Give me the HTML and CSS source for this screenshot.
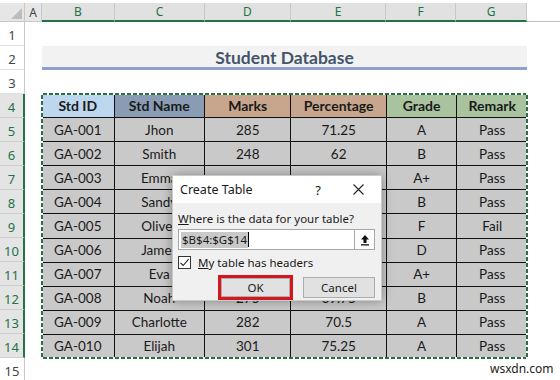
FILE: index.html
```html
<!DOCTYPE html>
<html>
<head>
<meta charset="utf-8">
<link rel="stylesheet" href="styles.css">
</head>
<body>
<div class="page">
  <div class="sheet">
    <div class="corner"><span class="tri"></span></div>
    <div class="ch">A</div>
    <div class="ch sel">B</div>
    <div class="ch sel">C</div>
    <div class="ch sel">D</div>
    <div class="ch sel">E</div>
    <div class="ch sel">F</div>
    <div class="ch sel">G</div>
    <div class="ch-rest"></div>

    <div class="rh r1">1</div>
    <div class="rh r2">2</div>
    <div class="rh r3">3</div>
    <div class="rh sel r4">4</div>
    <div class="rh sel r5">5</div>
    <div class="rh sel r6">6</div>
    <div class="rh sel r7">7</div>
    <div class="rh sel r8">8</div>
    <div class="rh sel r9">9</div>
    <div class="rh sel r10">10</div>
    <div class="rh sel r11">11</div>
    <div class="rh sel r12">12</div>
    <div class="rh sel r13">13</div>
    <div class="rh sel r14">14</div>
    <div class="rh r15">15</div>

    <div class="title">Student Database</div>

    <div class="tbl">
      <div class="th c-id">Std ID</div>
      <div class="th c-name">Std Name</div>
      <div class="th c-tan">Marks</div>
      <div class="th c-tan">Percentage</div>
      <div class="th c-green">Grade</div>
      <div class="th c-green">Remark</div>

      <div class="td">GA-001</div><div class="td">Jhon</div><div class="td">285</div><div class="td">71.25</div><div class="td">A</div><div class="td">Pass</div>
      <div class="td">GA-002</div><div class="td">Smith</div><div class="td">248</div><div class="td">62</div><div class="td">B</div><div class="td">Pass</div>
      <div class="td">GA-003</div><div class="td">Emma</div><div class="td"></div><div class="td"></div><div class="td">A+</div><div class="td">Pass</div>
      <div class="td">GA-004</div><div class="td">Sandy</div><div class="td"></div><div class="td"></div><div class="td">B</div><div class="td">Pass</div>
      <div class="td">GA-005</div><div class="td">Oliver</div><div class="td"></div><div class="td"></div><div class="td">F</div><div class="td">Fail</div>
      <div class="td">GA-006</div><div class="td">James</div><div class="td"></div><div class="td"></div><div class="td">D</div><div class="td">Pass</div>
      <div class="td">GA-007</div><div class="td">Eva</div><div class="td"></div><div class="td"></div><div class="td">A+</div><div class="td">Pass</div>
      <div class="td">GA-008</div><div class="td">Noah</div><div class="td">275</div><div class="td">69.75</div><div class="td">B</div><div class="td">Pass</div>
      <div class="td">GA-009</div><div class="td">Charlotte</div><div class="td">282</div><div class="td">70.5</div><div class="td">A</div><div class="td">Pass</div>
      <div class="td">GA-010</div><div class="td">Elijah</div><div class="td">301</div><div class="td">75.25</div><div class="td">A</div><div class="td">Pass</div>
      <div class="ants"></div>
    </div>
  </div>

  <div class="dialog">
    <div class="dlg-title">
      <span class="dlg-name">Create Table</span>
      <span class="dlg-help">?</span>
      <span class="dlg-close">
        <svg width="11" height="11" viewBox="0 0 11 11"><path d="M0.5 0.5 L10.5 10.5 M10.5 0.5 L0.5 10.5" stroke="#222" stroke-width="1.1" fill="none"/></svg>
      </span>
    </div>
    <div class="dlg-body">
      <div class="dlg-label"><u>W</u>here is the data for your table?</div>
      <div class="dlg-input">
        <span class="range">$B$4:$G$14</span>
        <span class="caret"></span>
        <span class="pick">
          <svg width="10" height="12" viewBox="0 0 10 12"><path d="M5 1 L9 5.5 L6.5 5.5 L6.5 9 L3.5 9 L3.5 5.5 L1 5.5 Z" fill="#111"/><rect x="1" y="10.2" width="8" height="1.3" fill="#111"/></svg>
        </span>
      </div>
      <div class="dlg-check">
        <span class="box">
          <svg width="11" height="11" viewBox="0 0 11 11"><path d="M1.5 5.8 L4.2 8.5 L9.6 2.2" stroke="#222" stroke-width="1.1" fill="none"/></svg>
        </span>
        <span><u>M</u>y table has headers</span>
      </div>
      <div class="dlg-buttons">
        <div class="ok-ring"><div class="btn">OK</div></div>
        <div class="btn cancel">Cancel</div>
      </div>
    </div>
  </div>

  <div class="mark">wsxdn.com</div>
</div>
</body>
</html>
```

FILE: styles.css
```css
* { box-sizing: border-box; }
html, body { margin: 0; padding: 0; background: #fff; }
body { width: 560px; height: 380px; overflow: hidden; font-family: "Lato", "Open Sans", sans-serif; }

.page { position: relative; width: 560px; height: 380px; padding-top: 3px; }

.sheet {
  display: grid;
  grid-template-columns: 25px 17px 73px 90px 86px 95px 70px 71px 1fr;
  grid-template-rows: 19px repeat(15, 24px);
}

.corner {
  grid-column: 1; grid-row: 1;
  background: #e6e6e6;
  border-right: 1px solid #c8c8c8;
  border-bottom: 1px solid #c8c8c8;
  position: relative;
}
.tri {
  position: absolute; right: 2px; bottom: 2px;
  width: 0; height: 0;
  border-left: 11px solid transparent;
  border-bottom: 11px solid #bdbdbd;
}

.ch {
  grid-row: 1;
  background: #e6e6e6;
  border-right: 1px solid #c8c8c8;
  border-bottom: 1px solid #c8c8c8;
  color: #444;
  font-family: "Noto Sans", sans-serif;
  font-size: 12px;
  display: flex; align-items: center; justify-content: center;
}
.ch.sel { background: #e1e1e1; color: #217346; border-bottom: 2px solid #217346; }
.ch-rest { grid-row: 1; border-bottom: 1px solid #bfbfbf; }

.rh {
  grid-column: 1;
  border-right: 1px solid #c8c8c8;
  border-bottom: 1px solid #e0e0e0;
  color: #444;
  font-family: "Noto Sans", sans-serif;
  font-size: 13px;
  display: flex; align-items: flex-end; justify-content: center;
  padding-bottom: 1px;
}
.rh.sel { background: #e4e4e4; color: #217346; border-right: 2px solid #217346; border-bottom-color: #cfcfcf; }
.r1 { grid-row: 2; } .r2 { grid-row: 3; } .r3 { grid-row: 4; } .r4 { grid-row: 5; }
.r5 { grid-row: 6; } .r6 { grid-row: 7; } .r7 { grid-row: 8; } .r8 { grid-row: 9; }
.r9 { grid-row: 10; } .r10 { grid-row: 11; } .r11 { grid-row: 12; } .r12 { grid-row: 13; }
.r13 { grid-row: 14; } .r14 { grid-row: 15; } .r15 { grid-row: 16; }

.title {
  grid-column: 3 / 9; grid-row: 3;
  background: #f2f2f2;
  border-bottom: 3px solid #8ea2d2;
  color: #44546a;
  font-weight: 700;
  font-size: 17.5px;
  display: flex; align-items: center; justify-content: center;
  padding-top: 1px;
}

.tbl {
  grid-column: 3 / 9; grid-row: 5 / 16;
  position: relative;
  display: grid;
  grid-template-columns: 72fr 90fr 86fr 95fr 70fr 70fr;
  grid-template-rows: repeat(11, 1fr);
  gap: 1px;
  background: #111;
}
.th, .td {
  display: flex; align-items: center; justify-content: center;
  color: #1a1a1a;
}
.th { font-weight: 700; font-size: 14px; }
.td { background: #c9c9c9; font-size: 13.5px; }
.c-id { background: #bdd7ee; }
.c-name { background: #8a9cb4; }
.c-tan { background: #c8a68d; }
.c-green { background: #a9c39f; }

.ants {
  position: absolute; inset: -1px;
  border: 2px solid #2a6e45;
  pointer-events: none;
}
.ants::before {
  content: "";
  position: absolute; inset: -2px;
  background:
    repeating-linear-gradient(90deg, #fff 0 2px, transparent 2px 6px) top left / 100% 2px no-repeat,
    repeating-linear-gradient(90deg, #fff 0 2px, transparent 2px 6px) bottom left / 100% 2px no-repeat,
    repeating-linear-gradient(180deg, #fff 0 2px, transparent 2px 6px) top left / 2px 100% no-repeat,
    repeating-linear-gradient(180deg, #fff 0 2px, transparent 2px 6px) top right / 2px 100% no-repeat;
}

.dialog {
  position: absolute;
  left: 172px; top: 175px;
  width: 210px; height: 126px;
  background: #f0f0f0;
  border: 1px solid #c9c9c9;
  box-shadow: 0 0 10px rgba(0,0,0,0.35);
  font-family: "Noto Sans", sans-serif;
  font-size: 11.5px;
  color: #1a1a1a;
  display: flex; flex-direction: column;
}
.dlg-title {
  height: 27px;
  background: #fff;
  display: flex; align-items: center;
  padding: 0 0 0 7px;
  font-size: 12.5px;
}
.dlg-name { flex: 1; }
.dlg-help { width: 18px; text-align: center; margin-right: 26px; font-size: 13px; }
.dlg-close { width: 16px; margin-right: 12px; display: flex; align-items: center; }

.dlg-body { padding: 7px 6px 0 5px; display: flex; flex-direction: column; }
.dlg-label { height: 17px; line-height: 17px; }
.dlg-input {
  margin-top: 2px;
  height: 21px;
  background: #fff;
  border: 1px solid #a8a8a8;
  display: flex; align-items: center;
  padding-left: 2px;
}
.range { background: #c9c9c9; padding: 0 1px; line-height: 16px; }
.caret { width: 1px; height: 15px; background: #000; }
.pick {
  margin-left: auto;
  width: 20px; height: 19px;
  border-left: 1px solid #a8a8a8;
  display: flex; align-items: center; justify-content: center;
  background: #fdfdfd;
}
.dlg-check { display: flex; align-items: center; gap: 7px; height: 22px; margin-top: 1px; }
.box {
  width: 13px; height: 13px;
  border: 1px solid #333;
  background: #fff;
  display: flex; align-items: center; justify-content: center;
}
.dlg-buttons { display: flex; align-items: center; justify-content: flex-end; gap: 10px; margin-top: 2px; }
.ok-ring { border: 3px solid #d5161d; }
.btn {
  width: 69px; height: 19px;
  background: #e1e1e1;
  border: 1px solid #adadad;
  display: flex; align-items: center; justify-content: center;
  font-size: 11.5px;
}
.cancel { width: 72px; height: 21px; }

.mark {
  position: absolute; left: 490px; top: 360px;
  font-family: "Noto Sans", sans-serif;
  font-size: 12px; color: #222;
}
```
